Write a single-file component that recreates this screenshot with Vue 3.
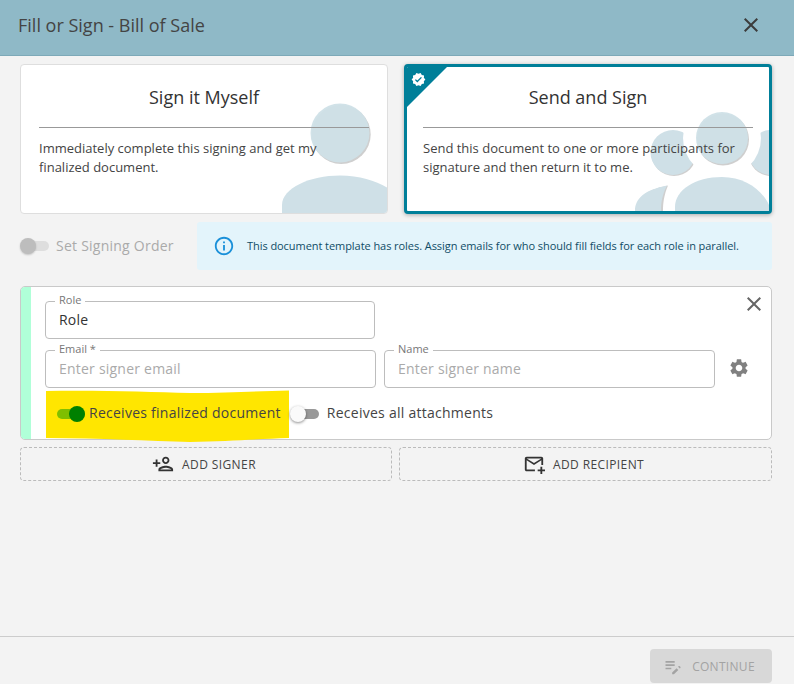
<script setup>
const fieldsRow = [
  { label: 'Email *', placeholder: 'Enter signer email' },
  { label: 'Name', placeholder: 'Enter signer name' }
]
</script>

<template>
  <div class="page">
    <header class="head">
      <div class="head-title">Fill or Sign - Bill of Sale</div>
      <svg class="head-close" viewBox="0 0 24 24"><path d="M19 6.41 17.59 5 12 10.59 6.41 5 5 6.41 10.59 12 5 17.59 6.41 19 12 13.41 17.59 19 19 17.59 13.41 12z" /></svg>
    </header>

    <main class="main">
      <section class="cards">
        <article class="card">
          <svg class="art" width="366" height="148" viewBox="21 65 366 148">
            <circle cx="341.2" cy="134.5" r="29.5" fill="#cfcfcf" />
            <circle cx="340" cy="133" r="29.5" fill="#cfe0e7" fill-opacity="0.95" />
            <path d="M282 214V205C282 188 310 175.5 340 175.5C360 175.5 376 181 388 188V214Z" fill="#cfe0e7" />
          </svg>
          <div class="card-body">
            <h2 class="card-title">Sign it Myself</h2>
            <p class="card-text">Immediately complete this signing and get my finalized document.</p>
          </div>
        </article>

        <article class="card card-active">
          <svg class="art" width="362" height="144" viewBox="407 67 362 144">
            <defs>
              <mask id="cut" maskUnits="userSpaceOnUse" x="407" y="67" width="362" height="144">
                <rect x="407" y="67" width="362" height="144" fill="#fff" />
                <circle cx="722" cy="138" r="39" fill="#000" />
              </mask>
            </defs>
            <g mask="url(#cut)">
              <circle cx="674" cy="153.5" r="22.5" fill="#cfcfcf" />
              <circle cx="771" cy="153.5" r="22.5" fill="#cfcfcf" />
              <circle cx="673" cy="152.5" r="22.5" fill="#cfe0e7" />
              <circle cx="771" cy="152.5" r="22.5" fill="#cfe0e7" />
            </g>
            <circle cx="723" cy="139.5" r="26" fill="#cfcfcf" />
            <circle cx="722" cy="138" r="26" fill="#cfe0e7" fill-opacity="0.95" />
            <path d="M636 211C636 198 646 190 668 185.5C664 195 663 203 663 211Z" fill="#cfcfcf" />
            <path d="M635 211C635 198 645 190 667 185.5C662 195 661 203 661 211Z" fill="#cfe0e7" />
            <path d="M675 211V207C675 190 695 177 722 177C745 177 762 190 769 205V211Z" fill="#cfe0e7" />
          </svg>
          <div class="corner"></div>
          <svg class="corner-check" viewBox="0 0 24 24"><path d="M23 12l-2.44-2.79.34-3.69-3.61-.82-1.89-3.2L12 2.96 8.6 1.5 6.71 4.69 3.1 5.5l.34 3.7L1 12l2.44 2.79-.34 3.7 3.61.82L8.6 22.5l3.4-1.47 3.4 1.46 1.89-3.19 3.61-.82-.34-3.69L23 12zm-12.91 4.72l-3.8-3.81 1.48-1.48 2.32 2.33 5.85-5.87 1.48 1.48-7.33 7.35z" /></svg>
          <div class="card-body">
            <h2 class="card-title">Send and Sign</h2>
            <p class="card-text">Send this document to one or more participants for signature and then return it to me.</p>
          </div>
        </article>
      </section>

      <section class="order">
        <div class="order-toggle">
          <span class="switch switch-muted"><span class="track"></span><span class="thumb"></span></span>
          <span class="order-label">Set Signing Order</span>
        </div>
        <div class="info">
          <svg class="info-icon" viewBox="0 0 24 24"><path d="M11 7h2v2h-2zm0 4h2v6h-2zm1-9C6.48 2 2 6.48 2 12s4.48 10 10 10 10-4.48 10-10S17.52 2 12 2zm0 18c-4.41 0-8-3.59-8-8s3.59-8 8-8 8 3.59 8 8-3.59 8-8 8z" /></svg>
          <span class="info-text">This document template has roles. Assign emails for who should fill fields for each role in parallel.</span>
        </div>
      </section>

      <section class="signer">
        <div class="signer-bar"></div>
        <div class="signer-body">
          <svg class="signer-close" viewBox="0 0 24 24"><path d="M19 6.41 17.59 5 12 10.59 6.41 5 5 6.41 10.59 12 5 17.59 6.41 19 12 13.41 17.59 19 19 17.59 13.41 12z" /></svg>
          <div class="field field-role">
            <label class="field-label">Role</label>
            <input class="field-input field-filled" value="Role" />
          </div>
          <div class="field-row">
            <div v-for="f in fieldsRow" :key="f.label" class="field">
              <label class="field-label">{{ f.label }}</label>
              <input class="field-input" :placeholder="f.placeholder" />
            </div>
            <svg class="gear" viewBox="0 0 24 24"><path d="M19.14 12.94c.04-.3.06-.61.06-.94 0-.32-.02-.64-.07-.94l2.03-1.58c.18-.14.23-.41.12-.61l-1.92-3.32c-.12-.22-.37-.29-.59-.22l-2.39.96c-.5-.38-1.03-.7-1.62-.94l-.36-2.54c-.04-.24-.24-.41-.48-.41h-3.84c-.24 0-.43.17-.47.41l-.36 2.54c-.59.24-1.13.57-1.62.94l-2.39-.96c-.22-.08-.47 0-.59.22L2.74 8.87c-.12.21-.08.47.12.61l2.03 1.58c-.05.3-.09.63-.09.94s.02.64.07.94l-2.03 1.58c-.18.14-.23.41-.12.61l1.92 3.32c.12.22.37.29.59.22l2.39-.96c.5.38 1.03.7 1.62.94l.36 2.54c.05.24.24.41.48.41h3.84c.24 0 .44-.17.47-.41l.36-2.54c.59-.24 1.13-.56 1.62-.94l2.39.96c.22.08.47 0 .59-.22l1.92-3.32c.12-.22.07-.47-.12-.61l-2.01-1.58zM12 15.6c-1.98 0-3.6-1.62-3.6-3.6s1.62-3.6 3.6-3.6 3.6 1.62 3.6 3.6-1.62 3.6-3.6 3.6z" /></svg>
          </div>
          <div class="toggles">
            <svg class="marker" width="243" height="53" viewBox="46 390 243 53"><path d="M46 391C100 390 150 392 190 393C230 393 260 391 289 390.5V438C260 439 230 441 190 442C150 441 100 438 46 438Z" fill="#ffe600" /></svg>
            <div class="toggle-item">
              <span class="switch switch-on"><span class="track"></span><span class="thumb"></span></span>
              <span class="toggle-text">Receives finalized document</span>
            </div>
            <div class="toggle-item toggle-off">
              <span class="switch switch-off"><span class="track"></span><span class="thumb"></span></span>
              <span class="toggle-text">Receives all attachments</span>
            </div>
          </div>
        </div>
      </section>

      <section class="adds">
        <button class="add">
          <svg class="add-icon" viewBox="0 0 24 24"><path d="M15 12c2.21 0 4-1.79 4-4s-1.79-4-4-4-4 1.79-4 4 1.79 4 4 4zm0-6c1.1 0 2 .9 2 2s-.9 2-2 2-2-.9-2-2 .9-2 2-2zm0 8c-2.67 0-8 1.34-8 4v2h16v-2c0-2.66-5.33-4-8-4zm-6 4c.22-.72 3.31-2 6-2 2.7 0 5.8 1.29 6 2H9zm-3-3v-3h3v-2H6V7H4v3H1v2h3v3z" /></svg>
          ADD SIGNER
        </button>
        <button class="add">
          <svg class="add-icon" viewBox="0 0 24 24"><path d="M22 13V6c0-1.1-.9-2-2-2H4c-1.1 0-2 .9-2 2v12c0 1.1.9 2 2 2h9v-2H4V8l8 5 8-5v5h2zm-10-2L4 6h16l-8 5zm7 4h2v3h3v2h-3v3h-2v-3h-3v-2h3z" /></svg>
          ADD RECIPIENT
        </button>
      </section>
    </main>

    <footer class="foot">
      <button class="continue">
        <svg class="continue-icon" viewBox="0 0 24 24"><path d="M3 10h11v2H3v-2zm0-2h11V6H3v2zm0 8h7v-2H3v2zm15.01-3.13.71-.71c.39-.39 1.02-.39 1.41 0l.71.71c.39.39.39 1.02 0 1.41l-.71.71-2.12-2.12zm-1.41 1.41L11 19.88V22h2.12l5.3-5.3-2.12-2.12z" /></svg>
        CONTINUE
      </button>
    </footer>
  </div>
</template>

<style>
html, body { margin: 0; background: #f3f3f3; }
</style>

<style scoped>
.page {
  width: 794px;
  height: 684px;
  display: flex;
  flex-direction: column;
  background: #f3f3f3;
  font-family: "Open Sans", "Liberation Sans", sans-serif;
  color: #444;
  overflow: hidden;
}
.head {
  height: 50px;
  flex: none;
  display: flex;
  align-items: center;
  justify-content: space-between;
  padding: 0 31px 5px 18px;
  background: #8fb9c7;
  border-bottom: 1px solid #7da9b8;
}
.head-title { font-size: 18px; color: #444; }
.head-close { width: 24px; height: 24px; fill: #3c3c3c; }
.main {
  flex: 1;
  padding: 8px 22px 0 20px;
  display: flex;
  flex-direction: column;
}
.cards {
  display: grid;
  grid-template-columns: 368px 368px;
  gap: 16px;
}
.card {
  position: relative;
  height: 150px;
  box-sizing: border-box;
  background: #fff;
  border: 1px solid #dedede;
  border-radius: 4px;
  overflow: hidden;
}
.card-active {
  border: 3px solid #007f99;
  box-shadow: 0 1px 4px rgba(0, 0, 0, 0.3);
}
.art { position: absolute; left: 0; top: 0; }
.card-body {
  position: relative;
  padding: 20px 18px 0;
}
.card-active .card-body { padding: 18px 16px 0; }
.card-title {
  margin: 0;
  height: 42px;
  line-height: 24px;
  font-size: 18px;
  font-weight: 400;
  text-align: center;
  color: #333;
  border-bottom: 1px solid #999;
}
.card-text {
  margin: 11px 0 0;
  font-size: 13px;
  line-height: 19px;
  color: #444;
}
.corner {
  position: absolute;
  left: 0;
  top: 0;
  width: 0;
  height: 0;
  border-style: solid;
  border-width: 40px 40px 0 0;
  border-color: #007f99 transparent transparent transparent;
}
.corner-check {
  position: absolute;
  left: 4px;
  top: 5px;
  width: 15px;
  height: 15px;
  fill: #fff;
}
.order {
  margin-top: 8px;
  display: flex;
  height: 48px;
}
.order-toggle {
  width: 177px;
  flex: none;
  display: flex;
  align-items: center;
  gap: 7px;
}
.order-label {
  font-size: 14px;
  letter-spacing: 0.24px;
  color: #aaa;
  margin-bottom: 2px;
}
.info {
  flex: 1;
  display: flex;
  align-items: center;
  gap: 12px;
  padding-left: 16px;
  background: #e3f4fb;
  border-radius: 3px;
  font-size: 11px;
  color: #0f4c66;
}
.info-text { letter-spacing: -0.06px; margin-bottom: 2px; }
.info-icon { width: 22px; height: 22px; fill: #1a90d9; flex: none; }
.switch {
  position: relative;
  width: 29px;
  height: 16px;
  flex: none;
  display: block;
}
.track {
  position: absolute;
  left: 1px;
  right: 0;
  top: 3px;
  height: 10px;
  border-radius: 5px;
  background: #999;
}
.thumb {
  position: absolute;
  top: 0;
  width: 16px;
  height: 16px;
  border-radius: 50%;
  box-sizing: border-box;
}
.switch-muted .track { background: #dedede; }
.switch-muted .thumb { left: 0; background: #bdbdbd; box-shadow: 0 1px 2px rgba(0, 0, 0, 0.2); }
.switch-on .track { background: #7fbf00; }
.switch-on .thumb { right: 0; background: #008000; }
.switch-off .thumb { left: 0; background: #fafafa; box-shadow: 0 1px 3px rgba(0, 0, 0, 0.45); }
.signer {
  margin-top: 16px;
  height: 154px;
  box-sizing: border-box;
  display: flex;
  background: #fff;
  border: 1px solid #c9c9c9;
  border-radius: 5px;
}
.signer-bar {
  width: 10px;
  flex: none;
  background: #b0ffd8;
  border-radius: 4px 0 0 4px;
}
.signer-body {
  position: relative;
  flex: 1;
  padding: 14px 0 0 14px;
}
.signer-close {
  position: absolute;
  right: 5px;
  top: 5px;
  width: 24px;
  height: 24px;
  fill: #666;
}
.field {
  position: relative;
  width: 331px;
  height: 38px;
}
.field-role { width: 330px; }
.field-row {
  margin-top: 11px;
  display: flex;
  align-items: center;
  gap: 8px;
}
.field-label {
  position: absolute;
  left: 10px;
  top: -8px;
  padding: 0 4px;
  background: #fff;
  font-size: 11px;
  line-height: 14px;
  color: #777;
}
.field-input {
  width: 100%;
  height: 100%;
  box-sizing: border-box;
  padding: 0 13px 2px;
  border: 1px solid #bdbdbd;
  border-radius: 4px;
  background: #fff;
  font-family: inherit;
  font-size: 14px;
  letter-spacing: 0.22px;
  color: #333;
  outline: none;
}
.field-input::placeholder { color: #aaa; opacity: 1; }
.gear {
  width: 22px;
  height: 22px;
  margin: -2px 0 0 5px;
  fill: #808080;
}
.toggles {
  position: relative;
  height: 51px;
  display: flex;
  align-items: center;
  padding-left: 11px;
  gap: 9px;
  font-size: 14px;
  letter-spacing: 0.26px;
  color: #444;
}
.marker {
  position: absolute;
  left: 1px;
  top: 2px;
}
.toggle-item {
  position: relative;
  display: flex;
  align-items: center;
  gap: 4px;
}
.toggle-text { margin-bottom: 2px; }
.toggle-off { gap: 8px; }
.adds {
  margin-top: 7px;
  display: grid;
  grid-template-columns: 372px 373px;
  gap: 7px;
}
.add {
  height: 34px;
  display: flex;
  align-items: center;
  justify-content: center;
  gap: 8px;
  padding: 0 4px 0 0;
  background: transparent;
  border: 1px dashed #bbb;
  border-radius: 4px;
  font-family: inherit;
  font-size: 12px;
  letter-spacing: 0.4px;
  color: #444;
}
.add-icon { width: 22px; height: 22px; fill: #333; }
.foot {
  flex: none;
  height: 48px;
  box-sizing: border-box;
  border-top: 1px solid #ccc;
  padding: 12px 22px 0 0;
  display: flex;
  justify-content: flex-end;
}
.continue {
  width: 122px;
  height: 34px;
  display: flex;
  align-items: center;
  justify-content: center;
  gap: 9px;
  padding: 0 4px 0 0;
  background: #d8d8d8;
  border: none;
  border-radius: 4px;
  font-family: inherit;
  font-size: 12px;
  letter-spacing: 0.3px;
  color: #a3a3a3;
}
.continue-icon { width: 20px; height: 20px; fill: #a3a3a3; }
</style>
